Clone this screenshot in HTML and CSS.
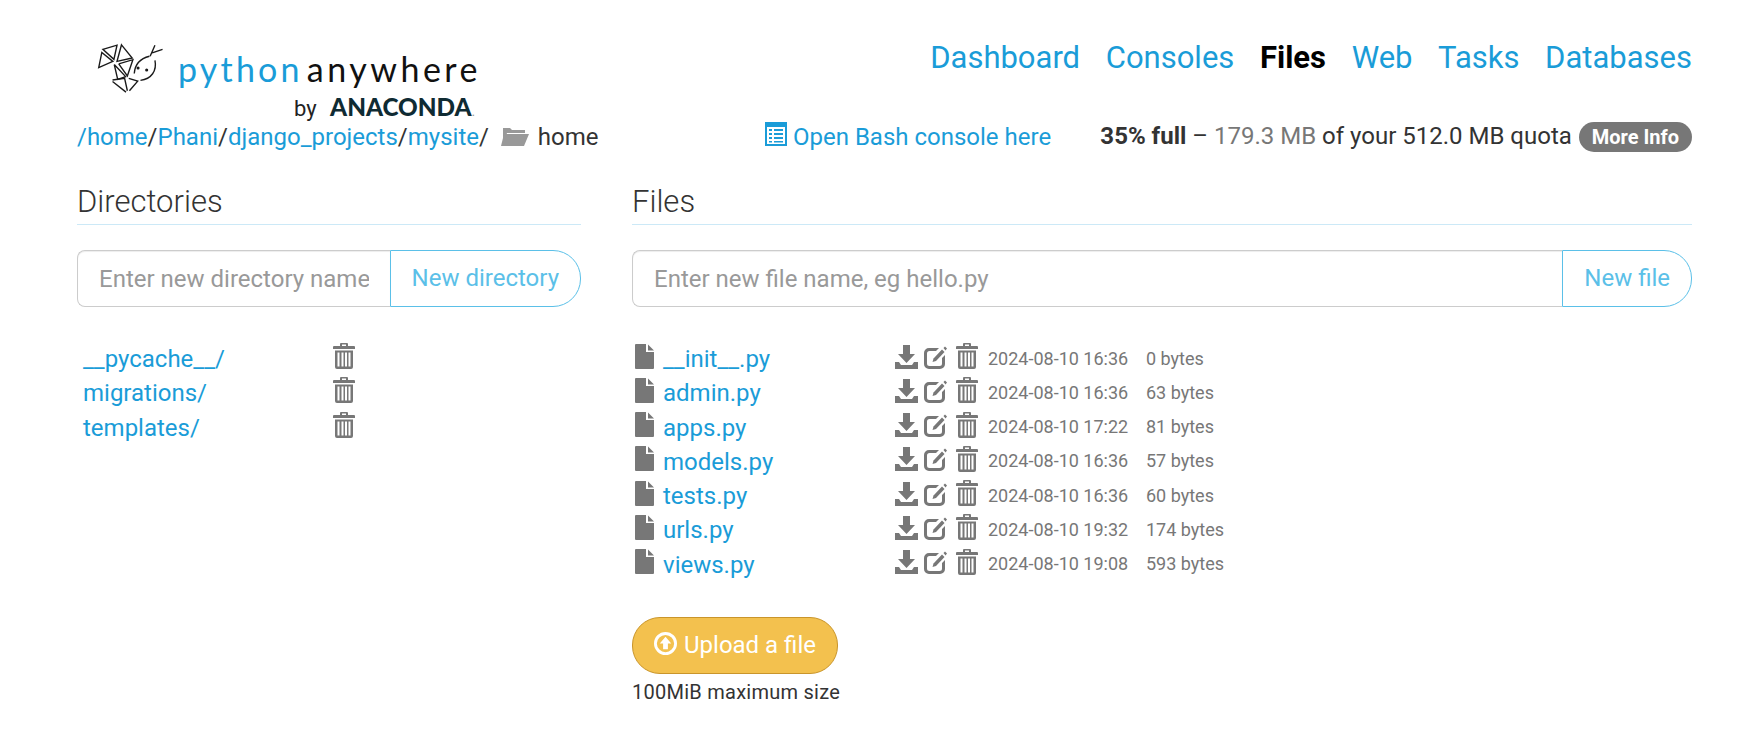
FILE: index.html
```html
<!DOCTYPE html>
<html lang="en">
<head>
    <meta charset="UTF-8">
    <title>File browser</title>
    <link rel="stylesheet" href="styles.css">
</head>
<body>
<svg class="defs" width="0" height="0">
    <symbol id="trash" viewBox="0 0 22 26">
        <path d="M8 0h6a1 1 0 0 1 1 1v2h6a1 1 0 0 1 1 1v2H0V4a1 1 0 0 1 1-1h6V1a1 1 0 0 1 1-1zm1 1.500V3h4V1.500z" fill-rule="evenodd"/>
        <path d="M2 7.500h18V24a2 2 0 0 1-2 2H4a2 2 0 0 1-2-2zM4.500 9.500v14h2v-14zM8.500 9.500v14h2v-14zM12 9.500v14h2v-14zM15.500 9.500v14h2v-14z" fill-rule="evenodd"/>
    </symbol>
    <symbol id="file" viewBox="0 0 19 25">
        <path d="M0 1a1 1 0 0 1 1-1h10v8h8v16a1 1 0 0 1-1 1H1a1 1 0 0 1-1-1z"/>
        <path d="M13 0.500l6 6h-6z"/>
    </symbol>
    <symbol id="download" viewBox="0 0 23 24">
        <path d="M8 0h7v9h5l-8.500 9L3 9h5z"/>
        <path d="M0 17h4l2 3h11l2-3h4v7H0z"/>
    </symbol>
    <symbol id="edit" viewBox="0 0 23 24">
        <path d="M5 3h10l-3 3H5.500A2.500 2.500 0 0 0 3 8.500v10A2.500 2.500 0 0 0 5.500 21h10a2.500 2.500 0 0 0 2.500-2.500V13l3-3v9a5 5 0 0 1-5 5H5a5 5 0 0 1-5-5V8a5 5 0 0 1 5-5z"/>
        <path d="M18 4.500l2.500 2.500-8.500 9-3.500 1 1-3.500z"/>
        <path d="M19.500 3l1.500-1.500 2 2L21.500 5.500z"/>
    </symbol>
</svg>

<div class="page">
    <div class="top">
        <a class="logo" href="#">
            <span class="logo-line">
                <svg class="logo-mark" viewBox="78 48 200 150" fill="none" stroke="#1a1a1a" stroke-width="4">
                    <path d="M95 66L136 54 127 95z"/>
                    <path d="M149 53L180 91 136 101z"/>
                    <path d="M83 119L92 75 124 101z"/>
                    <path d="M141 108L182 96 166 143 141 108"/>
                    <path d="M128 110L161 145 138 153 128 110"/>
                    <path d="M123 155L158 150 166 186"/>
                    <path d="M123 159L162 190"/>
                    <path d="M172 186L196 158 170 150"/>
                    <path d="M186 136C188 108 206 92 230 86"/>
                    <path d="M246 98C252 128 236 152 204 156"/>
                    <path d="M232 86L246 54M238 76L268 66"/>
                    <circle cx="197" cy="120" r="2.500" fill="#1a1a1a"/>
                    <circle cx="222" cy="126" r="2.500" fill="#1a1a1a"/>
                </svg>
                <span class="logo-py">python</span><span class="logo-any">anywhere</span>
            </span>
            <span class="logo-by">by <b>ANACONDA</b><i>.</i></span>
        </a>
        <nav class="nav">
            <a href="#">Dashboard</a>
            <a href="#">Consoles</a>
            <a class="active" href="#">Files</a>
            <a href="#">Web</a>
            <a href="#">Tasks</a>
            <a href="#">Databases</a>
        </nav>
    </div>

    <div class="pathbar">
        <div class="crumbs">
            <a href="#">/home</a>/<a href="#">Phani</a>/<a href="#">django_projects</a>/<a href="#">mysite</a>/
            <svg class="folder" viewBox="0 0 28 22">
                <path d="M2 3h7l2 2h13v3H6L3 17H2z"/>
                <path d="M7 10h21l-5 12H0l3-12z" transform="translate(0 -1)"/>
            </svg>
            <span>home</span>
        </div>
        <a class="bash" href="#">
            <svg class="bash-icon" viewBox="0 0 22 24">
                <path fill-rule="evenodd" d="M0 0h22v24H0zM2 5v17h18V5zM4 7h3v2H4zM9 7h9v2H9zM4 11h3v2H4zM9 11h9v2H9zM4 15h3v2H4zM9 15h9v2H9zM4 19h3v1.500H4zM9 19h9v1.500H9z"/>
            </svg>
            Open Bash console here
        </a>
        <div class="quota">
            <b>35% full</b> &ndash; <span class="used">179.3 MB</span> of your 512.0 MB quota
            <a class="more" href="#">More Info</a>
        </div>
    </div>

    <div class="cols">
        <section class="col-dirs">
            <h2>Directories</h2>
            <form class="addbox">
                <input type="text" placeholder="Enter new directory name">
                <button type="button">New directory</button>
            </form>
            <ul class="listing dirs">
                <li><a class="name" href="#">__pycache__/</a><svg class="ico trash"><use href="#trash"/></svg></li>
                <li><a class="name" href="#">migrations/</a><svg class="ico trash"><use href="#trash"/></svg></li>
                <li><a class="name" href="#">templates/</a><svg class="ico trash"><use href="#trash"/></svg></li>
            </ul>
        </section>

        <section class="col-files">
            <h2>Files</h2>
            <form class="addbox">
                <input type="text" placeholder="Enter new file name, eg hello.py">
                <button type="button">New file</button>
            </form>
            <ul class="listing files">
                <li>
                    <svg class="ico doc"><use href="#file"/></svg>
                    <a class="name" href="#">__init__.py</a>
                    <svg class="ico down"><use href="#download"/></svg>
                    <svg class="ico edit"><use href="#edit"/></svg>
                    <svg class="ico trash"><use href="#trash"/></svg>
                    <span class="date">2024-08-10 16:36</span>
                    <span class="size">0 bytes</span>
                </li>
                <li>
                    <svg class="ico doc"><use href="#file"/></svg>
                    <a class="name" href="#">admin.py</a>
                    <svg class="ico down"><use href="#download"/></svg>
                    <svg class="ico edit"><use href="#edit"/></svg>
                    <svg class="ico trash"><use href="#trash"/></svg>
                    <span class="date">2024-08-10 16:36</span>
                    <span class="size">63 bytes</span>
                </li>
                <li>
                    <svg class="ico doc"><use href="#file"/></svg>
                    <a class="name" href="#">apps.py</a>
                    <svg class="ico down"><use href="#download"/></svg>
                    <svg class="ico edit"><use href="#edit"/></svg>
                    <svg class="ico trash"><use href="#trash"/></svg>
                    <span class="date">2024-08-10 17:22</span>
                    <span class="size">81 bytes</span>
                </li>
                <li>
                    <svg class="ico doc"><use href="#file"/></svg>
                    <a class="name" href="#">models.py</a>
                    <svg class="ico down"><use href="#download"/></svg>
                    <svg class="ico edit"><use href="#edit"/></svg>
                    <svg class="ico trash"><use href="#trash"/></svg>
                    <span class="date">2024-08-10 16:36</span>
                    <span class="size">57 bytes</span>
                </li>
                <li>
                    <svg class="ico doc"><use href="#file"/></svg>
                    <a class="name" href="#">tests.py</a>
                    <svg class="ico down"><use href="#download"/></svg>
                    <svg class="ico edit"><use href="#edit"/></svg>
                    <svg class="ico trash"><use href="#trash"/></svg>
                    <span class="date">2024-08-10 16:36</span>
                    <span class="size">60 bytes</span>
                </li>
                <li>
                    <svg class="ico doc"><use href="#file"/></svg>
                    <a class="name" href="#">urls.py</a>
                    <svg class="ico down"><use href="#download"/></svg>
                    <svg class="ico edit"><use href="#edit"/></svg>
                    <svg class="ico trash"><use href="#trash"/></svg>
                    <span class="date">2024-08-10 19:32</span>
                    <span class="size">174 bytes</span>
                </li>
                <li>
                    <svg class="ico doc"><use href="#file"/></svg>
                    <a class="name" href="#">views.py</a>
                    <svg class="ico down"><use href="#download"/></svg>
                    <svg class="ico edit"><use href="#edit"/></svg>
                    <svg class="ico trash"><use href="#trash"/></svg>
                    <span class="date">2024-08-10 19:08</span>
                    <span class="size">593 bytes</span>
                </li>
            </ul>
            <button class="upload" type="button">
                <svg class="upload-icon" viewBox="0 0 24 24">
                    <path fill-rule="evenodd" d="M12 0a12 12 0 1 1 0 24a12 12 0 0 1 0-24zM12 3a9 9 0 1 0 0 18a9 9 0 0 0 0-18z"/>
                    <path d="M12 5l6 7h-3.500v6h-5v-6H6z"/>
                </svg>
                Upload a file
            </button>
            <p class="limit">100MiB maximum size</p>
        </section>
    </div>
</div>
</body>
</html>
```

FILE: styles.css
```css
*{
    box-sizing: border-box;
    margin: 0;
    padding: 0;
}
body{
    font-family: Roboto, "Liberation Sans", sans-serif;
    font-size: 24px;
    color: #333333;
    background: #ffffff;
}
a{
    color: #1a9cd8;
    text-decoration: none;
}
.defs{
    position: absolute;
}
.page{
    padding: 0 50px 0 77px;
}

/* header */
.top{
    display: flex;
    justify-content: space-between;
    height: 120px;
}
.logo{
    display: block;
    padding: 43px 0 0 20px;
    width: 440px;
}
.logo-line{
    display: flex;
    align-items: center;
    height: 52px;
    font-family: Lato, sans-serif;
    font-size: 34px;
    font-weight: 400;
    letter-spacing: 3.8px;
    line-height: 40px;
}
.logo-mark{
    width: 69px;
    height: 52px;
    margin-right: 12px;
}
.logo-py{
    color: #1a9cd8;
    letter-spacing: 3.200px;
    margin-right: 4px;
}
.logo-any{
    color: #111111;
    letter-spacing: 3.500px;
}
.logo-by{
    display: block;
    margin: -1px 0 0 197px;
    height: 26px;
    line-height: 26px;
    font-size: 22px;
    color: #222222;
    white-space: nowrap;
}
.logo-by b{
    font-family: Lato, sans-serif;
    font-weight: 900;
    font-size: 24.300px;
    color: #0f2b33;
    margin-left: 8px;
}
.logo-by i{
    color: #999999;
    font-style: normal;
    font-size: 14px;
}
.nav{
    display: flex;
    gap: 25.600px;
    padding-top: 39px;
    font-size: 31px;
    line-height: 38px;
}
.nav .active{
    color: #000000;
    font-weight: 700;
}

/* path row */
.pathbar{
    display: flex;
    align-items: center;
    height: 34px;
}
.crumbs{
    width: 688px;
    white-space: nowrap;
}
.folder{
    width: 28px;
    height: 22px;
    margin: 0 3px 0 6px;
    fill: #999999;
    vertical-align: -2px;
}
.bash{
    width: 335px;
    margin-top: -1px;
}
.bash-icon{
    width: 22px;
    height: 24px;
    fill: #1a9cd8;
    vertical-align: -1px;
}
.quota{
    flex: 1;
    text-align: right;
    white-space: nowrap;
}
.used{
    color: #777777;
}
.more{
    display: inline-block;
    margin-left: 1px;
    padding: 0 13px;
    height: 30px;
    line-height: 30px;
    font-size: 20px;
    font-weight: 700;
    color: #ffffff;
    background: #777777;
    border-radius: 15px;
    vertical-align: 0;
}

/* columns */
.cols{
    display: grid;
    grid-template-columns: 504px 1060px;
    gap: 51px;
    padding-top: 30px;
}
h2{
    font-size: 31px;
    font-weight: 300;
    line-height: 36px;
    padding-bottom: 4px;
    border-bottom: 1px solid #cce9f7;
    color: #333333;
}
.addbox{
    display: flex;
    height: 57px;
    margin-top: 25px;
}
.addbox input{
    flex: 1;
    min-width: 0;
    padding: 0 21px;
    font: 400 24px Roboto, sans-serif;
    color: #333333;
    border: 1px solid #cccccc;
    border-right: 0;
    border-radius: 8px 0 0 8px;
    box-shadow: inset 0 1px 1px rgba(0,0,0,.075);
}
.addbox input::placeholder{
    color: #999999;
    opacity: 1;
}
.addbox button{
    padding: 0 21px 2px 21px;
    font: 400 24px Roboto, sans-serif;
    color: #5bc0e8;
    background: #ffffff;
    border: 1px solid #5bc0e8;
    border-radius: 0 28px 28px 0;
}

/* listings */
.listing{
    list-style: none;
    margin-top: 35px;
}
.listing li{
    display: flex;
    align-items: center;
    height: 34.250px;
    white-space: nowrap;
}
.ico{
    fill: #777777;
    flex: none;
}
.dirs .name{
    width: 250px;
    margin-left: 6px;
}
.files .name{
    width: 232px;
}
.doc{
    width: 19px;
    height: 25px;
    margin: -6px 9px 0 3px;
}
.trash{
    width: 22px;
    height: 26px;
    margin-top: -6px;
}
.down{
    width: 23px;
    height: 24px;
    margin-right: 6px;
    margin-top: -5px;
}
.edit{
    width: 23px;
    height: 24px;
    margin-right: 9px;
    margin-top: -5px;
}
.date{
    width: 158px;
    margin: 0 0 2px 10px;
    font-size: 18px;
    color: #777777;
}
.size{
    margin-bottom: 2px;
    font-size: 18px;
    color: #777777;
}

/* upload */
.upload{
    display: flex;
    align-items: center;
    gap: 7px;
    margin-top: 35px;
    height: 57px;
    padding: 0 21px;
    font: 400 24px Roboto, sans-serif;
    color: #ffffff;
    background: #f3c14e;
    border: 1px solid #c9952b;
    border-radius: 28px;
}
.upload-icon{
    width: 23px;
    height: 23px;
    fill: #ffffff;
    margin-top: -4px;
}
.limit{
    margin-top: 6px;
    font-size: 20px;
    letter-spacing: 0.25px;
}
```
